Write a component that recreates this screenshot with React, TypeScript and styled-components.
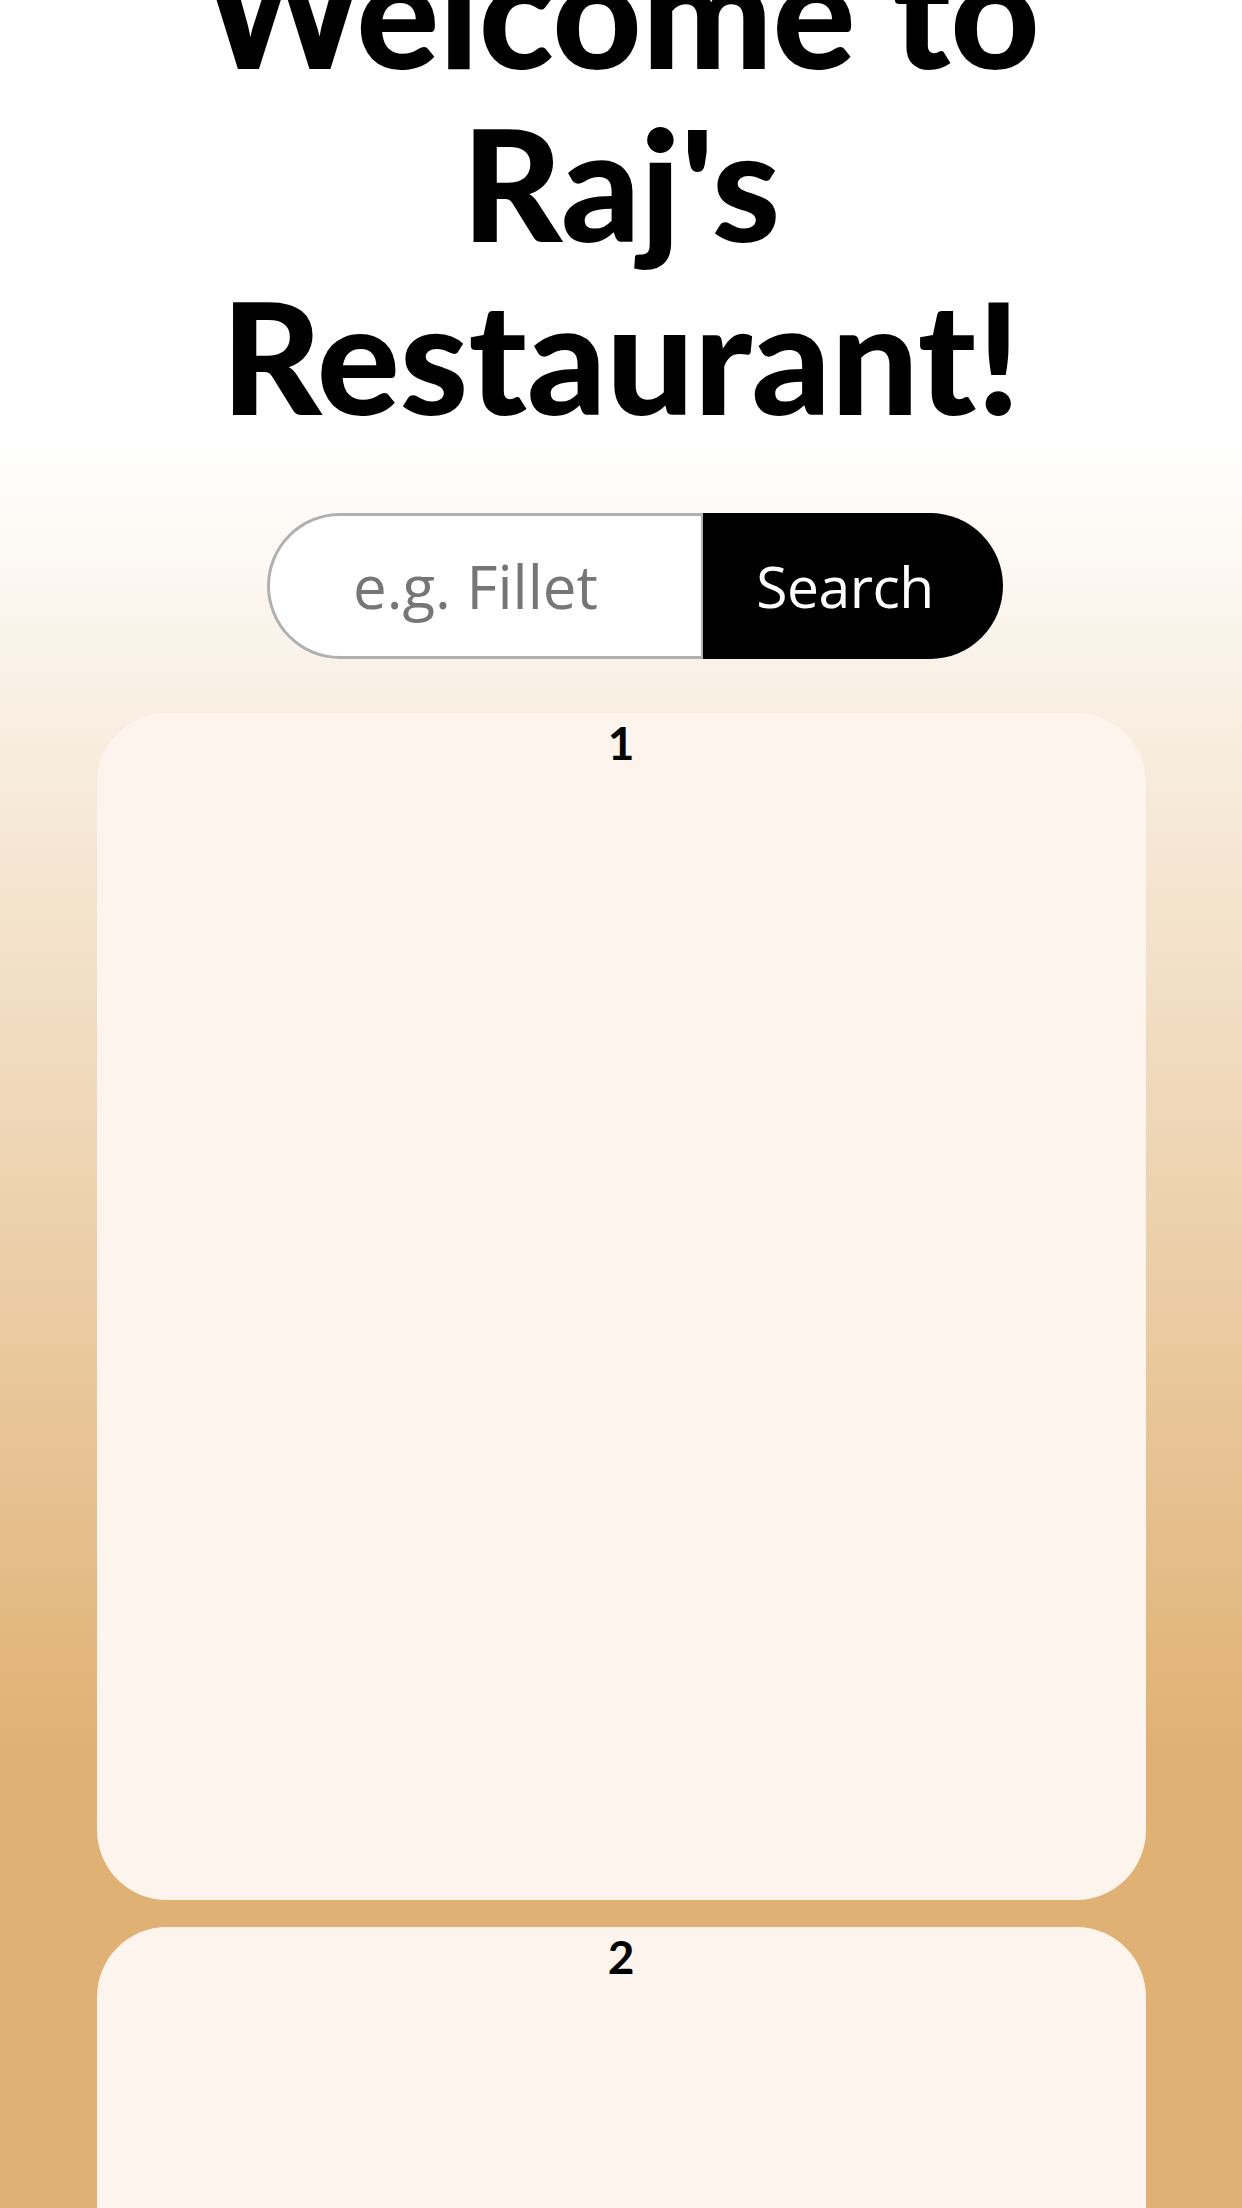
import React from "react";
import styled, { createGlobalStyle } from "styled-components";

const GlobalStyle = createGlobalStyle`
  html, body {
    margin: 0;
    padding: 0;
  }
  body {
    font-family: "Open Sans", "Liberation Sans", sans-serif;
    background: #e0b174;
  }
`;

const Page = styled.div`
  min-height: 2208px;
  overflow: hidden;
  background: linear-gradient(
    to bottom,
    #ffffff 0px,
    #ffffff 440px,
    #e0b174 1750px,
    #e0b174 100%
  );
  padding-bottom: 60px;
`;

const Title = styled.h1`
  margin: -77px auto 0;
  max-width: 1000px;
  text-align: center;
  font-family: Lato, "Liberation Sans", sans-serif;
  font-weight: 900;
  font-size: 155px;
  line-height: 173px;
  color: #000;
  letter-spacing: 0;
`;

const SearchRow = styled.form`
  display: flex;
  justify-content: center;
  margin: 71px 0 0 28px;
`;

const SearchInput = styled.input`
  box-sizing: border-box;
  width: 436px;
  height: 146px;
  border: 3px solid #b0b0b0;
  border-right-width: 2px;
  border-radius: 73px 0 0 73px;
  background: #fff;
  font-family: "Open Sans", "Liberation Sans", sans-serif;
  font-size: 60px;
  font-weight: 400;
  color: #333;
  text-align: center;
  padding: 0 30px 0 10px;
  outline: none;

  &::placeholder {
    color: #767676;
  }
`;

const SearchButton = styled.button`
  box-sizing: border-box;
  width: 300px;
  height: 146px;
  border: none;
  border-radius: 0 73px 73px 0;
  background: #000;
  color: #fff;
  font-family: "Open Sans", "Liberation Sans", sans-serif;
  font-size: 57px;
  font-weight: 400;
  letter-spacing: -0.5px;
  padding: 0 16px 0 0;
  cursor: pointer;
`;

const CardList = styled.div`
  display: flex;
  flex-direction: column;
  align-items: center;
  gap: 27px;
  margin-top: 54px;
`;

const Card = styled.section`
  box-sizing: border-box;
  width: 1049px;
  min-height: 1187px;
  border-radius: 70px;
  background: #fdf4ee;
  padding-top: 2px;
  display: flex;
  flex-direction: column;
  align-items: center;
`;

const CardNumber = styled.div`
  font-family: Lato, "Liberation Sans", sans-serif;
  font-weight: 700;
  font-size: 46px;
  line-height: 1.2;
  color: #000;
`;

const items = [1, 2];

export default function App() {
  return (
    <>
      <GlobalStyle />
      <Page>
        <Title>Welcome to Raj's Restaurant!</Title>
        <SearchRow onSubmit={(e) => e.preventDefault()}>
          <SearchInput placeholder="e.g. Fillet" />
          <SearchButton type="submit">Search</SearchButton>
        </SearchRow>
        <CardList>
          {items.map((n) => (
            <Card key={n}>
              <CardNumber>{n}</CardNumber>
            </Card>
          ))}
        </CardList>
      </Page>
    </>
  );
}
